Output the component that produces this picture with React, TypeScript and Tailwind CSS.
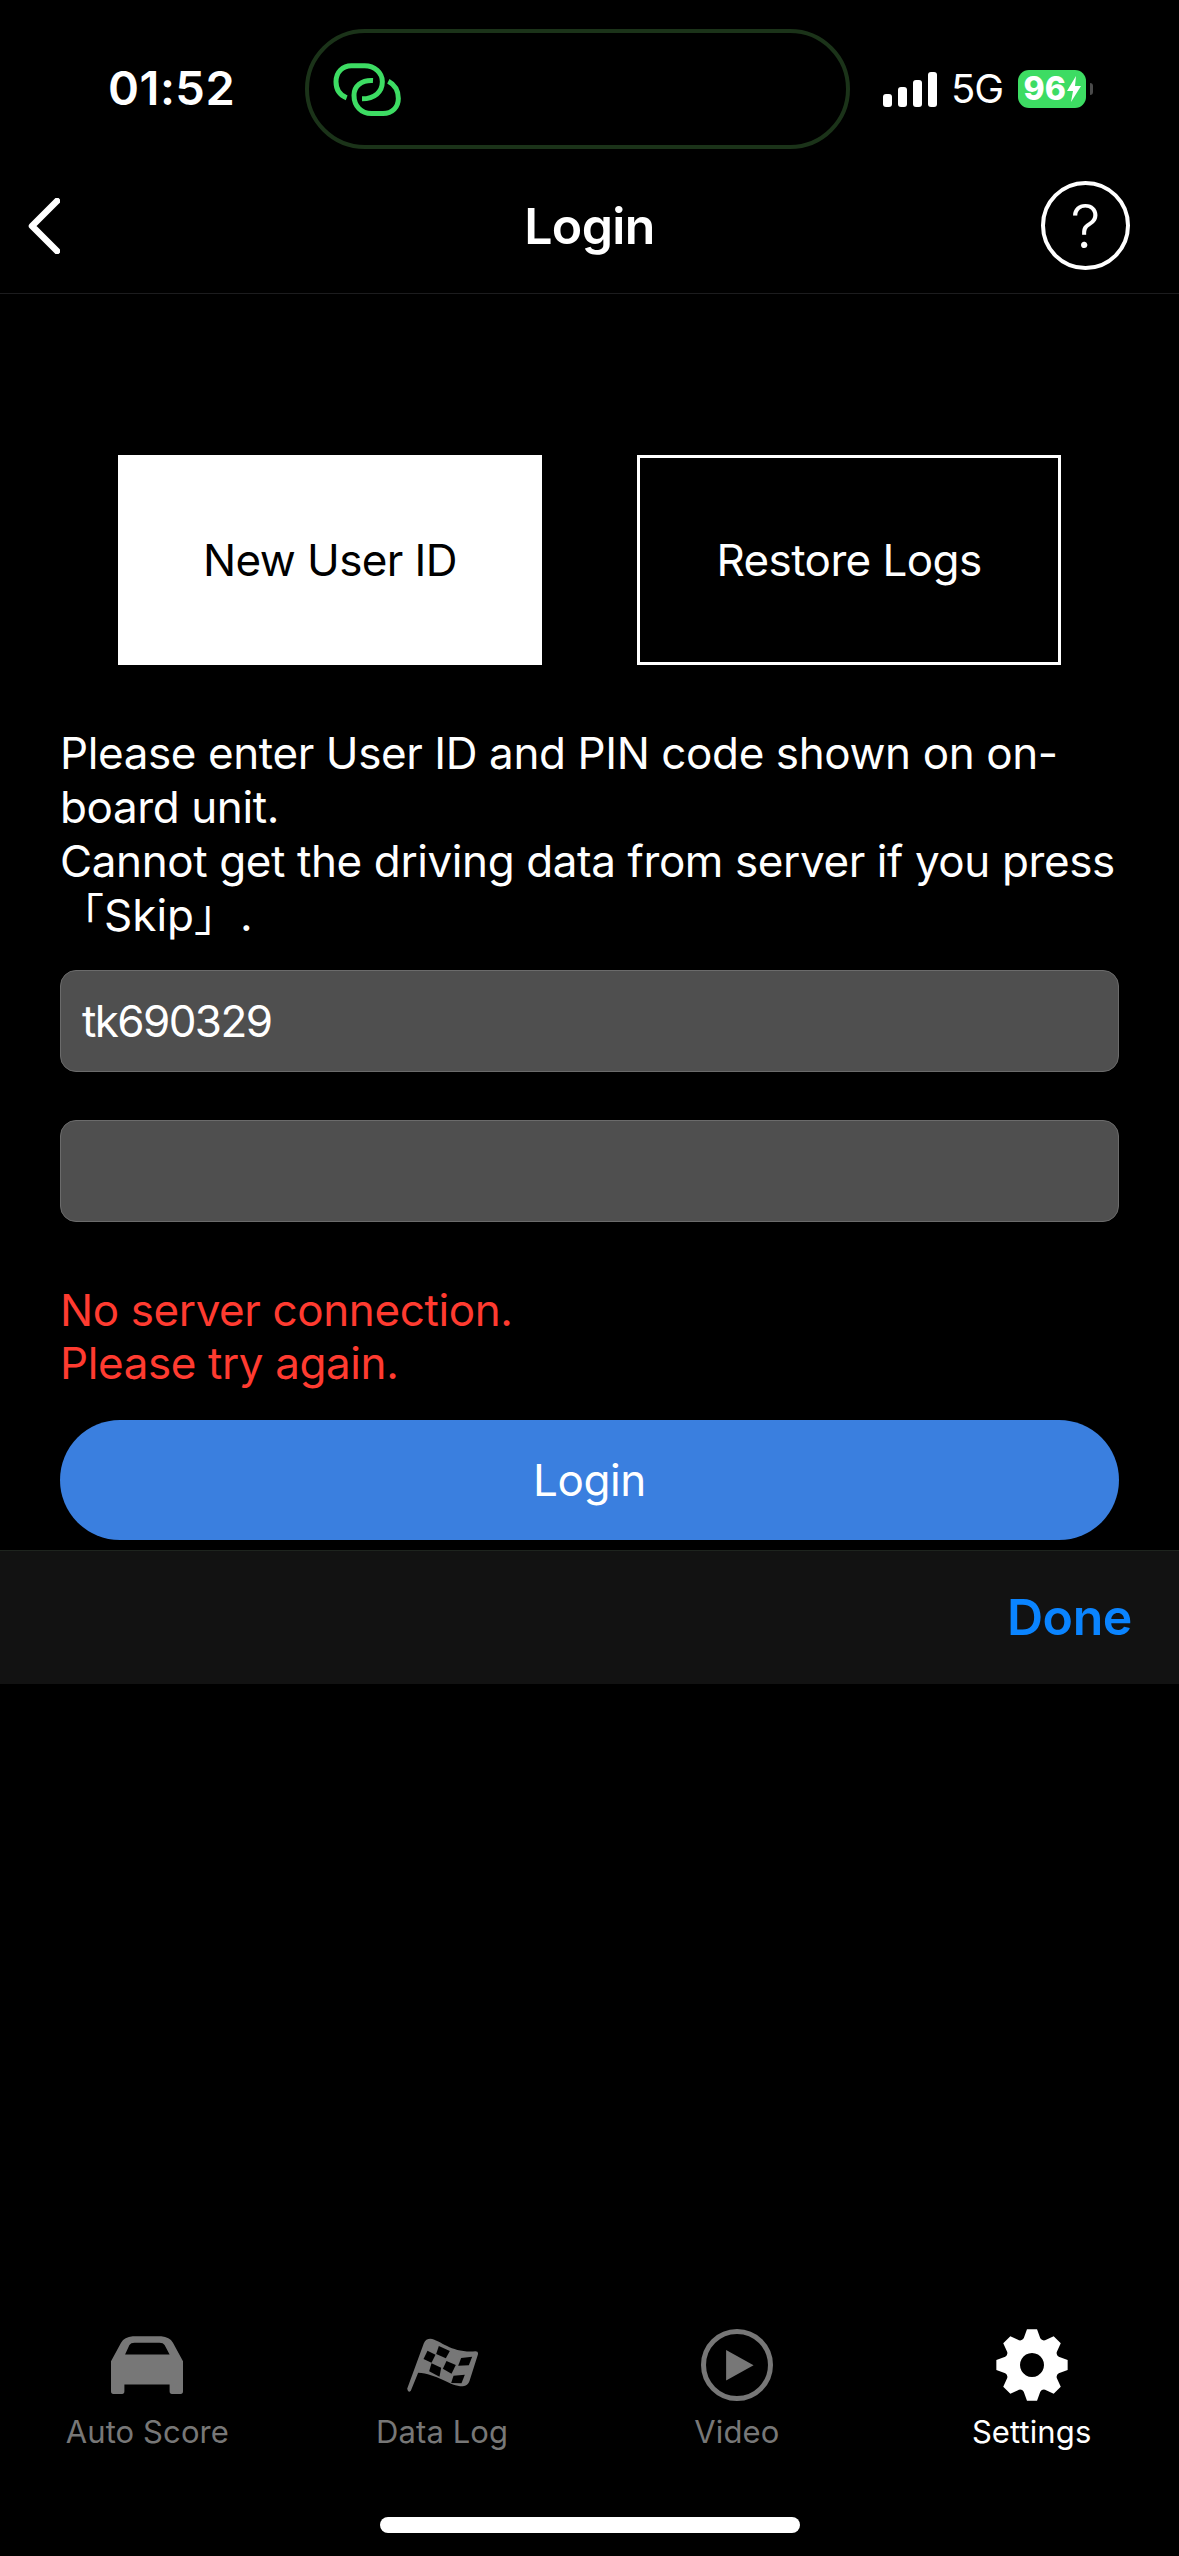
const font = "[font-family:Inter,'Noto_Sans_CJK_JP',sans-serif]";

function gearPath() {
  // 8 teeth, tips flat, valleys rounded
  const cx = 36;
  const cy = 36;
  let d = "";
  for (let i = 0; i < 8; i++) {
    const a = (i * Math.PI) / 4 - Math.PI / 2;
    const pt = (r: number, off: number) =>
      `${(cx + r * Math.cos(a + off)).toFixed(2)} ${(cy + r * Math.sin(a + off)).toFixed(2)}`;
    d += `${i === 0 ? "M" : "L"}${pt(28, -0.3)} L${pt(36, -0.14)} L${pt(36, 0.14)} L${pt(28, 0.3)} Q${pt(26, 0.3925)} ${pt(28, 0.485)} `;
  }
  return d + "Z M36 24 a12 12 0 1 0 0.01 0 Z";
}

function LinkIcon() {
  return (
    <svg viewBox="100 120 210 170" className="w-[70px] h-[57px] shrink-0" fill="none" stroke="#3ddc63" strokeWidth="15" strokeLinecap="butt" strokeLinejoin="round">
      <path d="M141 230 C120 222 109 205 109 182 C109 152 130 134 155 134 H195 C225 134 248 155 248 182 C248 212 225 233 187 233" />
      <path d="M220 178 C185 176 163 195 163 222 C163 255 185 277 215 277 H250 C278 277 296 258 296 232 C296 208 285 190 266 180" />
    </svg>
  );
}

function StatusBar() {
  return (
    <div className="h-[160px] pt-[29px] flex items-start shrink-0">
      <div className="w-[305px] h-[120px] pl-[108px] pb-[3px] flex items-center">
        <span className="text-[47px] font-semibold text-white leading-none tracking-[0.5px]">01:52</span>
      </div>
      <div className="w-[545px] h-[120px] rounded-[60px] border-[4px] border-[#1b3319] flex items-center pl-[24px]">
        <LinkIcon />
      </div>
      <div className="h-[120px] flex items-center pl-[33px]">
        <svg viewBox="0 0 54 35" className="w-[54px] h-[35px]" fill="white">
          <rect x="0" y="22" width="9" height="13" rx="3" />
          <rect x="15" y="15" width="9" height="20" rx="3" />
          <rect x="30" y="8" width="9" height="27" rx="3" />
          <rect x="45" y="0" width="9" height="35" rx="3" />
        </svg>
        <span className="ml-[14px] text-[40px] text-white leading-none tracking-[-1px]">5G</span>
        <div className="ml-[15px] w-[68px] h-[38px] rounded-[11px] bg-[#3ddc63] flex items-center justify-center gap-[1px]">
          <span className="text-[32px] font-extrabold text-white leading-none">96</span>
          <svg viewBox="0 0 14 26" className="w-[14px] h-[26px]" fill="white">
            <path d="M9 0 L0 15 H6 L4 26 L14 10 H8 Z" />
          </svg>
        </div>
        <div className="ml-[4px] w-[3px] h-[12px] rounded-r-full bg-[#4a4a4a]" />
      </div>
    </div>
  );
}

function NavBar() {
  return (
    <div className="h-[134px] shrink-0 border-b border-[#1c1c1e] grid grid-cols-3 items-center pb-[2px]">
      <div className="pl-[28px]">
        <svg viewBox="0 0 32 56" className="w-[32px] h-[56px]" fill="none" stroke="white" strokeWidth="6.5" strokeLinecap="round" strokeLinejoin="round">
          <path d="M29 3 L4 28 L29 53" />
        </svg>
      </div>
      <div className="text-center text-[50px] font-semibold text-white leading-none tracking-[-0.6px]">Login</div>
      <div className="flex justify-end pr-[49px]">
        <div className="w-[89px] h-[89px] rounded-full border-[4px] border-white flex items-center justify-center text-[60px] font-light text-white leading-none">?</div>
      </div>
    </div>
  );
}

function Tab({ label, active, children }: { label: string; active?: boolean; children: React.ReactNode }) {
  return (
    <div className="w-[295px] flex flex-col items-center">
      <div className="h-[72px] flex items-center justify-center">{children}</div>
      <div className={`mt-[13px] text-[31px] leading-[36px] tracking-[0.1px] ${active ? "text-white" : "text-[#777777]"}`}>{label}</div>
    </div>
  );
}

function TabBar() {
  return (
    <div className="flex justify-center">
      <Tab label="Auto Score">
        <svg viewBox="150 105 215 173" className="w-[72px] h-[58px]" fill="#777777" fillRule="evenodd">
          <path d="M150 180 L180 125 Q190 108 215 106 H300 Q325 108 335 125 L365 180 V270 Q365 278 358 278 H332 Q325 278 325 270 V250 H190 V270 Q190 278 183 278 H157 Q150 278 150 270 Z M192 160 L205 132 Q209 125 220 125 H295 Q306 125 310 132 L325 160 Z" />
        </svg>
      </Tab>
      <Tab label="Data Log">
        <svg viewBox="30 36 218 165" className="w-[73px] h-[55px]" fill="#777777">
          <path d="M33 188 L83 52 Q90 36 108 39 C135 46 170 82 238 76 Q248 76 245 86 L220 165 Q215 180 200 181 C165 182 120 142 66 140 L44 194 Q36 202 33 188 Z" />
          <g fill="#000000">
            <path d="M94 74 L118 86 L106 110 L82 99 Z" />
            <path d="M128 60 L161 75 L149 97 L120 84 Z" />
            <path d="M106 112 L135 125 L130 152 L99 136 Z" />
            <path d="M151 105 L179 117 L166 143 L140 128 Z" />
            <path d="M195 96 L228 92 L218 118 L186 119 Z" />
            <path d="M172 149 L206 146 L196 172 L165 171 Z" />
          </g>
        </svg>
      </Tab>
      <Tab label="Video">
        <svg viewBox="123 84 215 215" className="w-[72px] h-[72px]">
          <circle cx="230.5" cy="191.5" r="100" fill="none" stroke="#777777" strokeWidth="15" />
          <path d="M198 147 L280 192 L198 238 Z" fill="#777777" />
        </svg>
      </Tab>
      <Tab label="Settings" active>
        <svg viewBox="0 0 72 72" className="w-[72px] h-[72px]" fill="white" fillRule="evenodd">
          <path d={gearPath()} />
        </svg>
      </Tab>
    </div>
  );
}

export default function App() {
  return (
    <div className={`w-[1179px] h-[2556px] bg-black flex flex-col overflow-hidden ${font}`}>
      <StatusBar />
      <NavBar />

      <div className="pt-[161px] flex justify-center gap-[95px] shrink-0 tracking-[-0.6px]">
        <div className="w-[424px] h-[210px] bg-white flex items-center justify-center text-[44px] text-black">New User ID</div>
        <div className="w-[424px] h-[210px] border-[3px] border-white flex items-center justify-center text-[44px] text-white">Restore Logs</div>
      </div>

      <div className="px-[60px] shrink-0 tracking-[-0.4px]">
        <p className="mt-[61px] text-[44px] leading-[54px] text-white">
          Please enter User ID and PIN code shown on on-board unit.
          <br />
          Cannot get the driving data from server if you press
          <br />
          <span className="tracking-normal">「Skip」</span>
          <span className="ml-[2px]">.</span>
        </p>
        <div className="mt-[28px] h-[102px] rounded-[16px] bg-[#4f4f4f] border border-[#6b6b6b] flex items-center px-[21px] text-[44px] text-white tracking-[-1.6px]">tk690329</div>
        <div className="mt-[48px] h-[102px] rounded-[16px] bg-[#4f4f4f] border border-[#6b6b6b]" />
        <p className="mt-[62px] text-[44px] leading-[53px] text-[#ff3b30]">
          No server connection.
          <br />
          Please try again.
        </p>
        <div className="mt-[30px] h-[120px] rounded-full bg-[#3a7fdf] flex items-center justify-center text-[44px] text-white">Login</div>
      </div>

      <div className="mt-[10px] h-[134px] shrink-0 bg-[#121212] border-t border-[#1e241e] flex items-center justify-end pr-[47px] text-[50px] font-semibold text-[#0a84ff] tracking-[-0.4px]">Done</div>

      <div className="flex-1" />
      <TabBar />
      <div className="mt-[67px] mb-[23px] w-[420px] h-[16px] rounded-full bg-white self-center shrink-0" />
    </div>
  );
}
